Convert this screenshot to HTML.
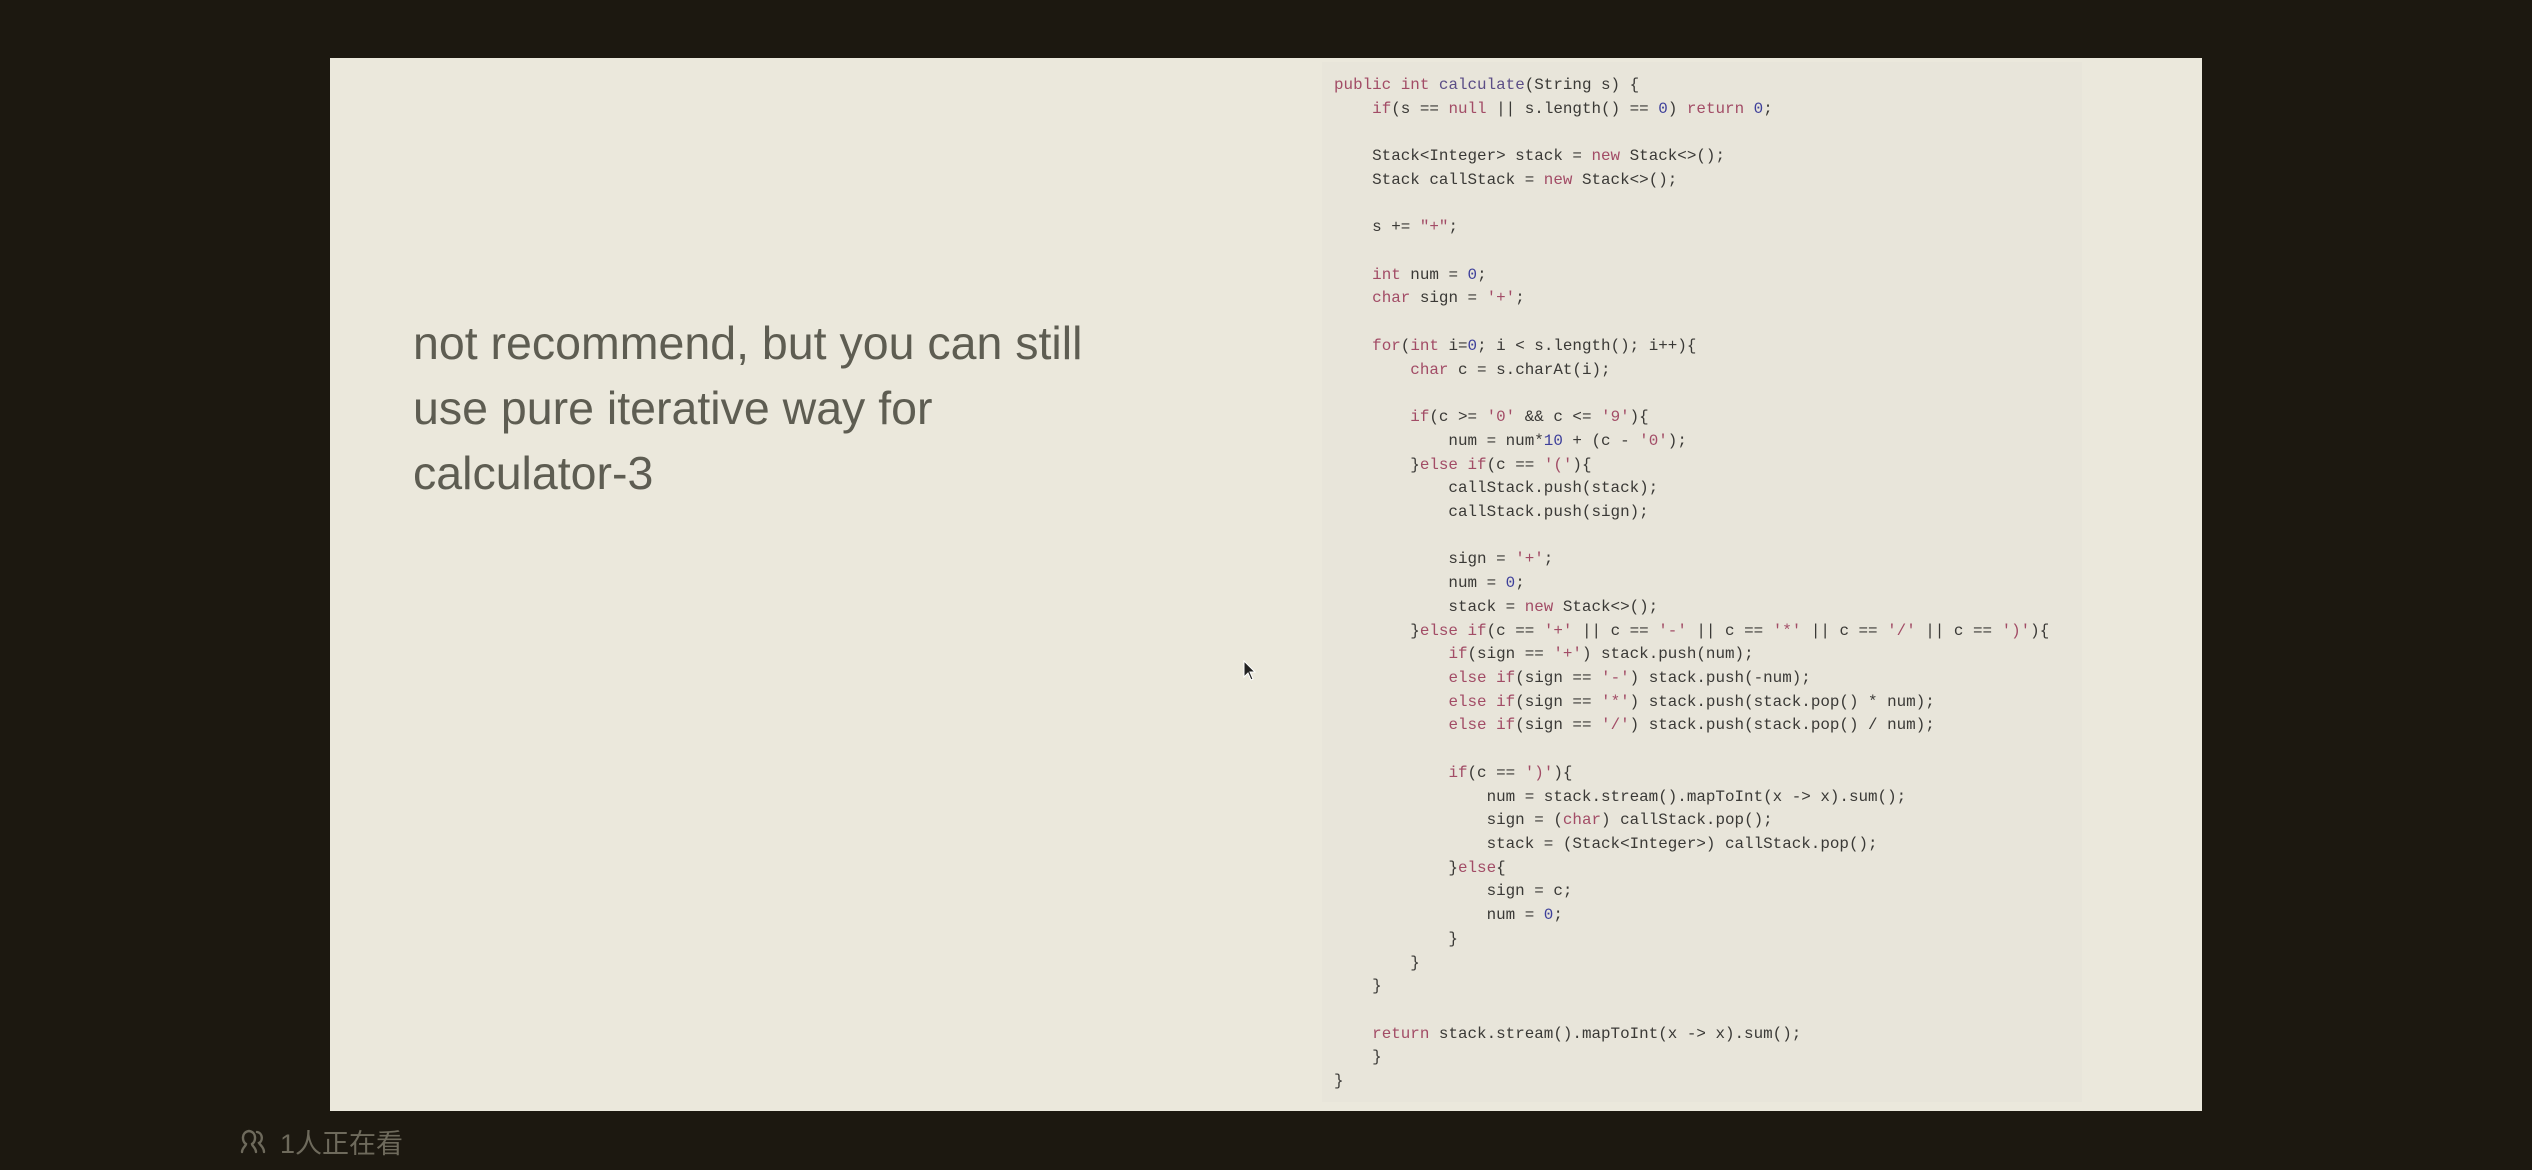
<!DOCTYPE html>
<html><head><meta charset="utf-8"><style>
html,body{margin:0;padding:0;}
body{width:2532px;height:1170px;background:#1c1810;position:relative;overflow:hidden;}
.slide{position:absolute;left:330px;top:58px;width:1872px;height:1053px;background:#ebe8dc;}
.panel{position:absolute;left:1322px;top:62px;width:760px;height:1040px;background:#e8e5da;}
.txt{position:absolute;left:413px;top:311px;font-family:"Liberation Sans",sans-serif;font-size:46.5px;line-height:65px;color:#5e5d52;white-space:nowrap;}
pre{position:absolute;left:1334px;top:74px;margin:0;font-family:"Liberation Mono",monospace;font-size:15.9px;line-height:23.72px;color:#3a3936;}
.k{color:#a24c66}.n{color:#3d3f9a}.f{color:#5b4d86}
.foot{position:absolute;left:280px;top:1122px;font-family:"Liberation Sans","Noto Sans CJK SC",sans-serif;font-size:27px;color:#6e6a5c;}
</style></head><body>
<div class="slide"></div>
<div class="panel"></div>
<div class="txt">not recommend, but you can still<br>use pure iterative way for<br>calculator-3</div>
<pre><span class="k">public int</span> <span class="f">calculate</span>(String s) {
    <span class="k">if</span>(s == <span class="k">null</span> || s.length() == <span class="n">0</span>) <span class="k">return</span> <span class="n">0</span>;

    Stack&lt;Integer&gt; stack = <span class="k">new</span> Stack&lt;&gt;();
    Stack callStack = <span class="k">new</span> Stack&lt;&gt;();

    s += <span class="k">"+"</span>;

    <span class="k">int</span> num = <span class="n">0</span>;
    <span class="k">char</span> sign = <span class="k">'+'</span>;

    <span class="k">for</span>(<span class="k">int</span> i=<span class="n">0</span>; i &lt; s.length(); i++){
        <span class="k">char</span> c = s.charAt(i);

        <span class="k">if</span>(c &gt;= <span class="k">'0'</span> &amp;&amp; c &lt;= <span class="k">'9'</span>){
            num = num*<span class="n">10</span> + (c - <span class="k">'0'</span>);
        }<span class="k">else if</span>(c == <span class="k">'('</span>){
            callStack.push(stack);
            callStack.push(sign);

            sign = <span class="k">'+'</span>;
            num = <span class="n">0</span>;
            stack = <span class="k">new</span> Stack&lt;&gt;();
        }<span class="k">else if</span>(c == <span class="k">'+'</span> || c == <span class="k">'-'</span> || c == <span class="k">'*'</span> || c == <span class="k">'/'</span> || c == <span class="k">')'</span>){
            <span class="k">if</span>(sign == <span class="k">'+'</span>) stack.push(num);
            <span class="k">else if</span>(sign == <span class="k">'-'</span>) stack.push(-num);
            <span class="k">else if</span>(sign == <span class="k">'*'</span>) stack.push(stack.pop() * num);
            <span class="k">else if</span>(sign == <span class="k">'/'</span>) stack.push(stack.pop() / num);

            <span class="k">if</span>(c == <span class="k">')'</span>){
                num = stack.stream().mapToInt(x -&gt; x).sum();
                sign = (<span class="k">char</span>) callStack.pop();
                stack = (Stack&lt;Integer&gt;) callStack.pop();
            }<span class="k">else</span>{
                sign = c;
                num = <span class="n">0</span>;
            }
        }
    }

    <span class="k">return</span> stack.stream().mapToInt(x -&gt; x).sum();
    }
}</pre>
<svg style="position:absolute;left:1243px;top:660px" width="14" height="22" viewBox="0 0 14 22"><path d="M1 1 L1 17 L5 13 L8 20 L10 19 L7 12 L12 12 Z" fill="#222" stroke="#fff" stroke-width="1"/></svg>
<svg style="position:absolute;left:238px;top:1128px" width="30" height="26" viewBox="0 0 30 26"><g fill="none" stroke="#6e6a5c" stroke-width="2.4" stroke-linecap="round"><path d="M4 24 C4 20 8 18 8 16 C4 14 3 4 11 3 C19 4 18 14 14 16 C14 18 18 20 18 24"/><path d="M19 4 C25 5 25 13 21 15 C22 17 26 19 26 24"/></g></svg>
<div class="foot">1人正在看</div>
</body></html>
